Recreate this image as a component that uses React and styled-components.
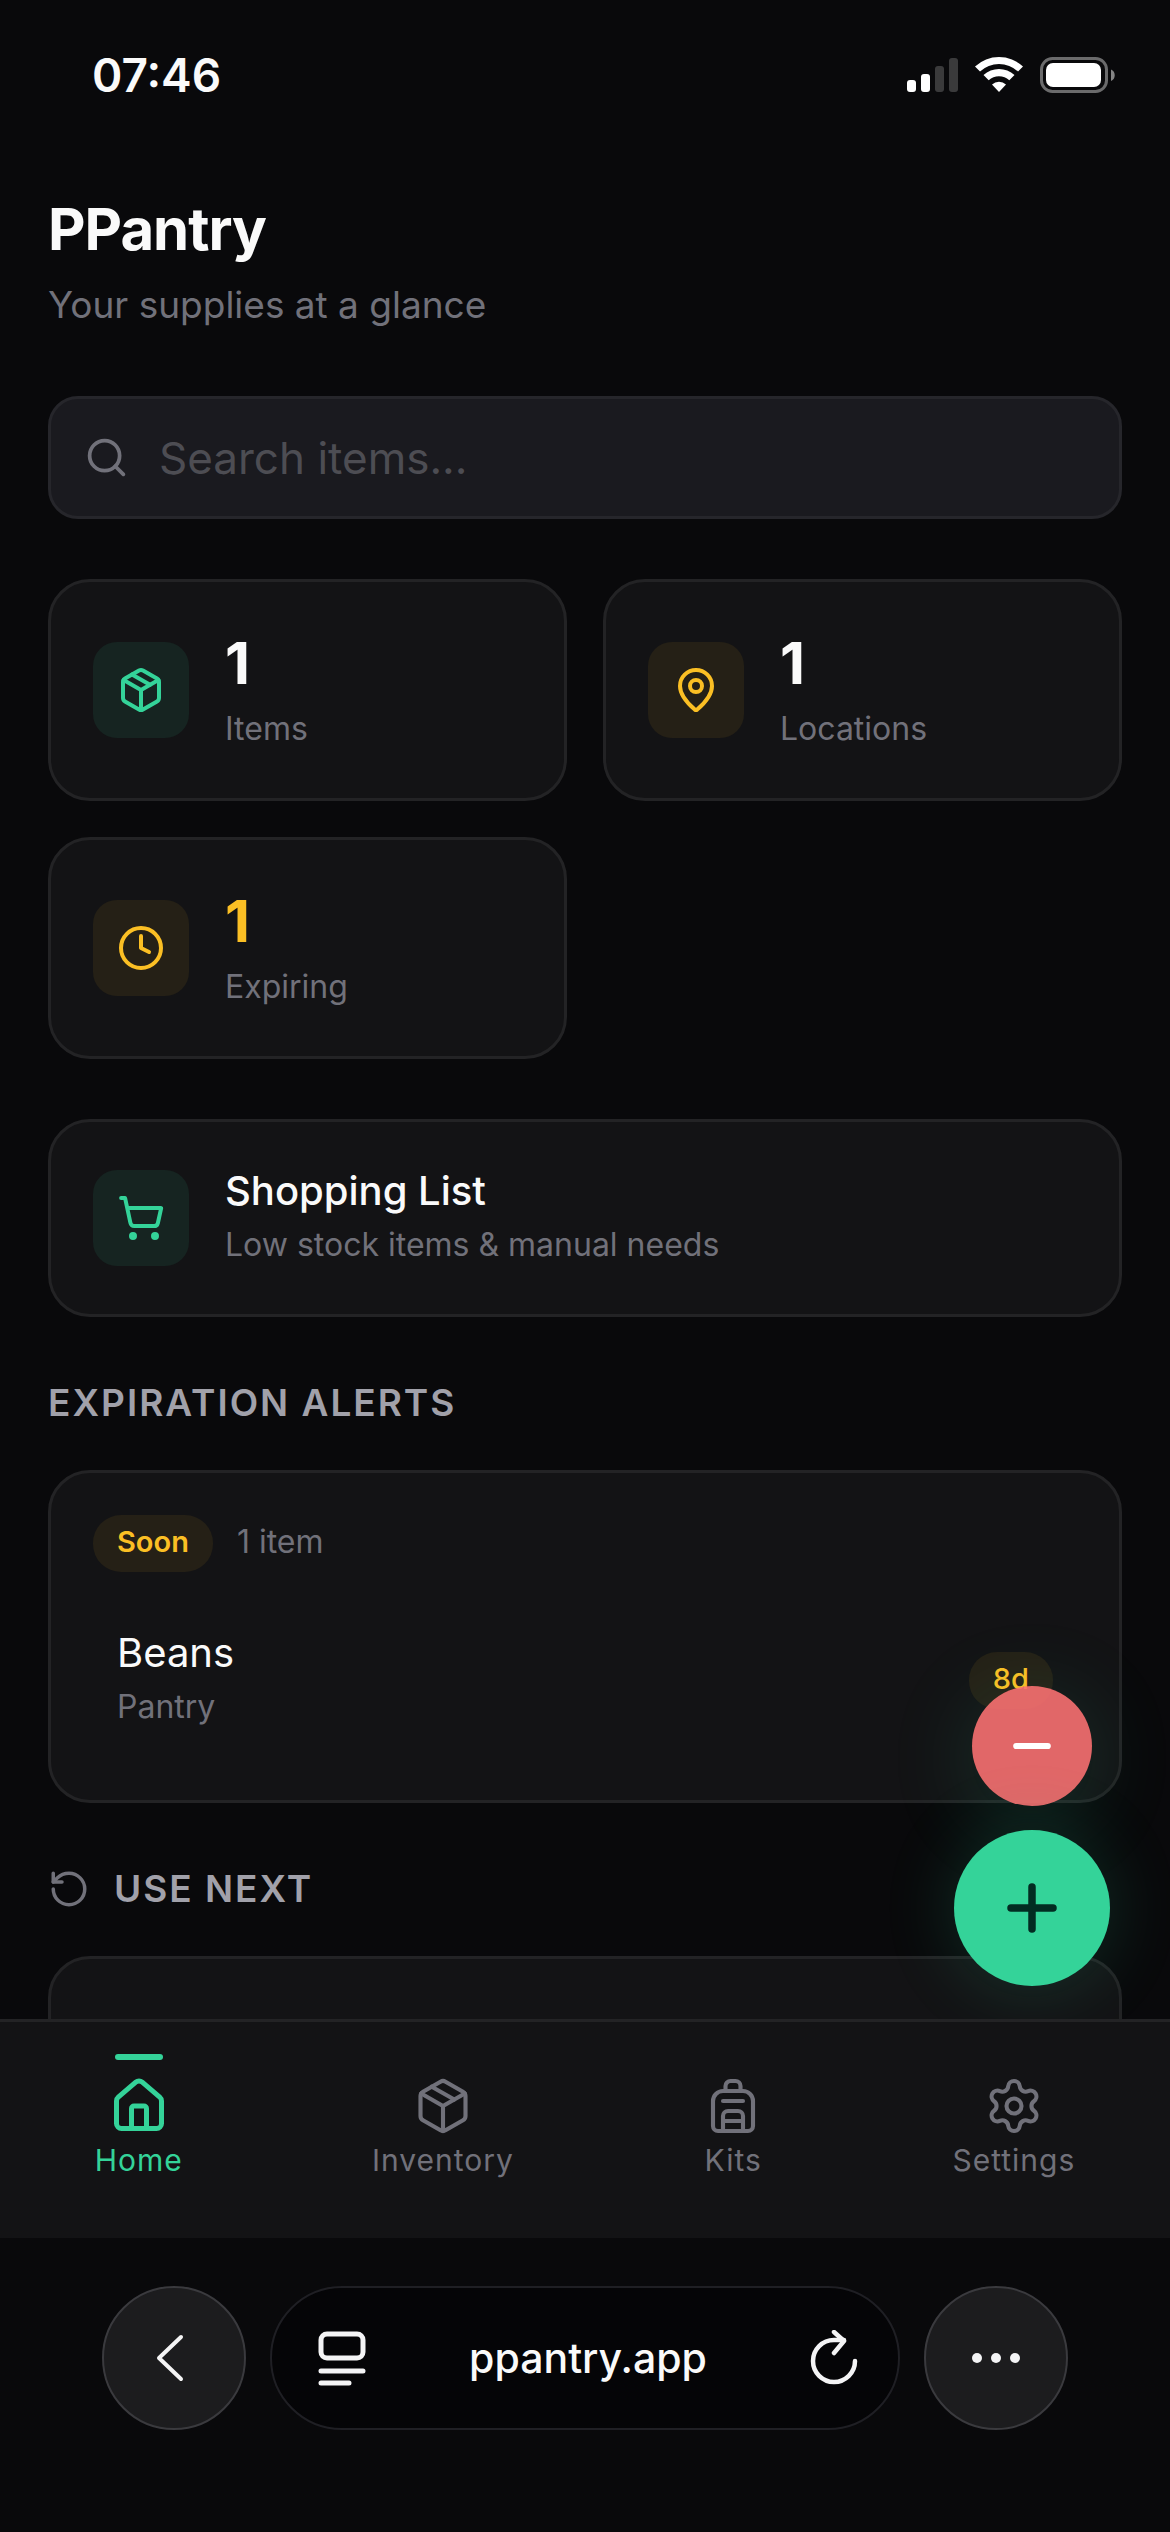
import React from 'react'
import styled, { createGlobalStyle } from 'styled-components'
import {
  Backpack,
  Clock,
  House,
  MapPin,
  Minus,
  Package,
  Plus,
  RotateCcw,
  Search,
  Settings,
  ShoppingCart,
} from 'lucide-react'

const stats = [
  { label: 'Items', value: 1, icon: Package, tone: 'green' },
  { label: 'Locations', value: 1, icon: MapPin, tone: 'amber' },
  { label: 'Expiring', value: 1, icon: Clock, tone: 'amber', warn: true },
]

const tabs = [
  { label: 'Home', icon: House, active: true },
  { label: 'Inventory', icon: Package },
  { label: 'Kits', icon: Backpack },
  { label: 'Settings', icon: Settings },
]

const StatusIcons = () => (
  <svg width="212" height="40" viewBox="0 0 212 40" aria-hidden="true">
    <g fill="#fff">
      <rect x="0" y="25" width="9" height="12" rx="3" />
      <rect x="14" y="19" width="9" height="18" rx="3" />
      <rect x="28" y="11" width="9" height="26" rx="3" opacity="0.2" />
      <rect x="42" y="3" width="9" height="34" rx="3" opacity="0.2" />
      <path d="M68 11.5a35 35 0 0 1 48 0l-5 5a28 28 0 0 0-38 0z" />
      <path d="M76.500 20a23 23 0 0 1 31 0l-5.200 5.200a15.500 15.500 0 0 0-20.600 0z" />
      <path d="M85 29.500a10.500 10.500 0 0 1 14 0L92 37z" />
      <rect x="139" y="8" width="55" height="24" rx="7" />
      <path d="M204 14.500c5 2 5 9.500 0 11.500z" opacity="0.5" />
    </g>
    <rect x="134.500" y="3.500" width="65" height="33" rx="11" fill="none" stroke="#fff" strokeWidth="3" opacity="0.4" />
  </svg>
)

const BackIcon = () => (
  <svg width="48" height="48" viewBox="0 0 48 48" aria-hidden="true">
    <path d="M31 3 9 24l22 21" fill="none" stroke="#f4f4f5" strokeWidth="4" strokeLinecap="round" strokeLinejoin="round" />
  </svg>
)

const ReaderIcon = () => (
  <svg width="48" height="56" viewBox="0 0 48 56" fill="none" stroke="#f4f4f5" strokeWidth="5" aria-hidden="true">
    <rect x="3" y="4" width="42" height="24" rx="6" />
    <path d="M3 41h42M3 53h28" strokeLinecap="round" />
  </svg>
)

const ReloadIcon = () => (
  <svg width="48" height="56" viewBox="0 0 48 56" fill="none" stroke="#f4f4f5" strokeWidth="4.500" strokeLinecap="round" strokeLinejoin="round" aria-hidden="true">
    <path d="M45 31a21 21 0 1 1-21-21h10" />
    <path d="M24 2l10 9-10 12" />
  </svg>
)

const MoreIcon = () => (
  <svg width="50" height="12" viewBox="0 0 50 12" fill="#f4f4f5" aria-hidden="true">
    <circle cx="6" cy="6" r="5" />
    <circle cx="25" cy="6" r="5" />
    <circle cx="44" cy="6" r="5" />
  </svg>
)

const App = () => (
  <Shell>
    <GlobalStyle />
    <StatusBar>
      <Time>07:46</Time>
      <StatusIcons />
    </StatusBar>

    <Main>
      <header>
        <Title>PPantry</Title>
        <Subtitle>Your supplies at a glance</Subtitle>
      </header>

      <SearchBox>
        <Search size={45} strokeWidth={2} />
        <SearchInput type="search" placeholder="Search items..." aria-label="Search items" />
      </SearchBox>

      <StatGrid>
        {stats.map(({ label, value, icon: Icon, tone, warn }) => (
          <StatCard key={label}>
            <IconTile $tone={tone}><Icon size={48} /></IconTile>
            <div>
              <StatValue $warn={warn}>{value}</StatValue>
              <Caption>{label}</Caption>
            </div>
          </StatCard>
        ))}
      </StatGrid>

      <ShoppingLink href="#shopping">
        <IconTile $tone="green"><ShoppingCart size={48} /></IconTile>
        <div>
          <ShoppingTitle>Shopping List</ShoppingTitle>
          <Caption>Low stock items &amp; manual needs</Caption>
        </div>
      </ShoppingLink>

      <SectionTitle>Expiration Alerts</SectionTitle>
      <AlertCard>
        <AlertHead>
          <Badge $bold>Soon</Badge>
          <Caption>1 item</Caption>
        </AlertHead>
        <AlertRow>
          <div>
            <ItemName>Beans</ItemName>
            <Caption>Pantry</Caption>
          </div>
          <Badge>8d</Badge>
        </AlertRow>
      </AlertCard>

      <SectionTitle>
        <RotateCcw size={42} strokeWidth={2} />
        Use Next
      </SectionTitle>
      <NextCard />
    </Main>

    <Dock>
      <Fabs>
        <RemoveButton type="button" aria-label="Remove item"><Minus size={54} strokeWidth={2.75} /></RemoveButton>
        <AddButton type="button" aria-label="Add item"><Plus size={72} strokeWidth={2.5} /></AddButton>
      </Fabs>
      <TabBar>
        {tabs.map(({ label, icon: Icon, active }) => (
          <Tab key={label} href={`#${label.toLowerCase()}`} $active={active}>
            <Icon size={60} strokeWidth={active ? 2 : 1.65} />
            {label}
          </Tab>
        ))}
      </TabBar>
    </Dock>

    <BrowserBar>
      <RoundButton type="button" aria-label="Back"><BackIcon /></RoundButton>
      <AddressBar>
        <BareButton type="button" aria-label="Page menu"><ReaderIcon /></BareButton>
        <Address>ppantry.app</Address>
        <BareButton type="button" aria-label="Reload"><ReloadIcon /></BareButton>
      </AddressBar>
      <RoundButton type="button" aria-label="More"><MoreIcon /></RoundButton>
    </BrowserBar>
  </Shell>
)

const GlobalStyle = createGlobalStyle`
  * {
    box-sizing: border-box;
  }
  body {
    margin: 0;
    background: #09090b;
    color: #fafafa;
    font-family: Inter, "Liberation Sans", sans-serif;
  }
  h1, h2, p {
    margin: 0;
  }
  button {
    padding: 0;
    border: 0;
    background: none;
    color: inherit;
    cursor: pointer;
  }
  a {
    color: inherit;
    text-decoration: none;
  }
  svg {
    display: block;
    flex-shrink: 0;
  }
`

const Shell = styled.div`
  display: flex;
  flex-direction: column;
  height: 100vh;
`

const StatusBar = styled.div`
  display: flex;
  align-items: center;
  justify-content: space-between;
  padding: 48px 51px 48px 92px;
`

const Time = styled.span`
  font-size: 46px;
  line-height: 54px;
  font-weight: 600;
`

const Main = styled.main`
  flex: 1;
  min-height: 0;
  overflow-y: auto;
  scrollbar-width: none;
  padding: 42px 48px 0;
`

const Title = styled.h1`
  font-size: 58px;
  line-height: 74px;
  font-weight: 700;
  letter-spacing: -1px;
`

const Subtitle = styled.p`
  margin-top: 10px;
  color: #71717a;
  font-size: 37px;
  line-height: 58px;
`

const SearchBox = styled.div`
  display: flex;
  align-items: center;
  gap: 30px;
  height: 123px;
  margin-top: 62px;
  padding: 0 33px;
  border: 3px solid #26262b;
  border-radius: 30px;
  background: #1a1a1f;
  color: #71717a;
`

const SearchInput = styled.input`
  flex: 1;
  min-width: 0;
  padding: 0;
  border: 0;
  outline: 0;
  background: none;
  color: #fafafa;
  font: 44px Inter, "Liberation Sans", sans-serif;
  &::placeholder {
    color: #4d4d53;
    opacity: 1;
  }
`

const Card = styled.div`
  border: 3px solid #232325;
  border-radius: 42px;
  background: #131315;
`

const StatGrid = styled.div`
  display: grid;
  grid-template-columns: 1fr 1fr;
  gap: 36px;
  margin-top: 60px;
`

const StatCard = styled(Card)`
  display: flex;
  align-items: center;
  gap: 36px;
  height: 222px;
  padding: 0 42px;
`

const IconTile = styled.div`
  display: grid;
  place-items: center;
  flex-shrink: 0;
  width: 96px;
  height: 96px;
  border-radius: 24px;
  background: ${props => (props.$tone === 'green' ? '#162421' : '#252016')};
  color: ${props => (props.$tone === 'green' ? '#34d399' : '#fbbf24')};
`

const StatValue = styled.p`
  color: ${props => (props.$warn ? '#fbbf24' : '#fafafa')};
  font-size: 58px;
  line-height: 78px;
  font-weight: 700;
`

const Caption = styled.p`
  color: #71717a;
  font-size: 32px;
  line-height: 54px;
`

const ShoppingLink = styled(Card).attrs({ as: 'a' })`
  display: flex;
  align-items: center;
  gap: 36px;
  height: 198px;
  margin-top: 60px;
  padding: 0 42px;
`

const ItemName = styled.p`
  font-size: 40px;
  line-height: 54px;
`

const ShoppingTitle = styled(ItemName)`
  font-weight: 500;
`

const SectionTitle = styled.h2`
  display: flex;
  align-items: center;
  gap: 24px;
  margin: 54px 0 36px;
  color: #a1a1aa;
  font-size: 37px;
  line-height: 63px;
  font-weight: 600;
  letter-spacing: 2px;
  text-transform: uppercase;
  svg {
    color: #71717a;
  }
`

const AlertCard = styled(Card)`
  padding: 42px 42px 36px;
`

const AlertHead = styled.div`
  display: flex;
  align-items: flex-start;
  gap: 24px;
`

const Badge = styled.span`
  padding: 0 24px 3px;
  border-radius: 28px;
  background: #252016;
  color: #fbbf24;
  font-size: 29px;
  line-height: 54px;
  font-weight: ${props => (props.$bold ? 600 : 500)};
`

const AlertRow = styled.div`
  display: flex;
  align-items: center;
  justify-content: space-between;
  margin-top: 24px;
  padding: 30px 24px;
`

const NextCard = styled(Card)`
  height: 240px;
`

const Dock = styled.div`
  position: relative;
`

/* floats over the list, above the tab bar */
const Fabs = styled.div`
  position: absolute;
  right: 60px;
  bottom: 252px;
  display: flex;
  flex-direction: column;
  align-items: center;
  gap: 24px;
`

const RemoveButton = styled.button`
  display: grid;
  place-items: center;
  z-index: 1;
  width: 120px;
  height: 120px;
  border-radius: 50%;
  background: rgba(248, 113, 113, 0.9);
  color: #fff;
  box-shadow: 0 12px 90px rgba(52, 211, 153, 0.16);
`

const AddButton = styled.button`
  display: grid;
  place-items: center;
  z-index: 2;
  width: 156px;
  height: 156px;
  border-radius: 50%;
  background: #34d399;
  color: #022c22;
  box-shadow: 0 0 72px rgba(52, 211, 153, 0.18);
`

const TabBar = styled.nav`
  position: relative;
  z-index: 3;
  display: flex;
  justify-content: space-around;
  height: 219px;
  padding-top: 54px;
  border-top: 3px solid #232325;
  background: #131315;
`

const Tab = styled.a`
  position: relative;
  display: flex;
  flex-direction: column;
  align-items: center;
  gap: 2px;
  height: 108px;
  color: ${props => (props.$active ? '#34d399' : '#71717a')};
  font-size: 30px;
  line-height: 45px;
  letter-spacing: 1px;
  &::before {
    content: '';
    display: ${props => (props.$active ? 'block' : 'none')};
    position: absolute;
    top: -22px;
    width: 48px;
    height: 6px;
    border-radius: 3px;
    background: #34d399;
  }
`

const BrowserBar = styled.div`
  display: flex;
  gap: 24px;
  padding: 48px 102px 102px;
`

const RoundButton = styled.button`
  display: grid;
  place-items: center;
  width: 144px;
  height: 144px;
  border: 2px solid #3a3a3e;
  border-radius: 50%;
  background: #1c1c1e;
`

const AddressBar = styled.div`
  flex: 1;
  display: flex;
  align-items: center;
  justify-content: space-between;
  height: 144px;
  padding: 0 40px 0 46px;
  border: 2px solid #1f1f24;
  border-radius: 72px;
  background: #050507;
`

const BareButton = styled.button`
  flex-shrink: 0;
`

const Address = styled.span`
  font-size: 41px;
  line-height: 54px;
  font-weight: 500;
`

export default App
